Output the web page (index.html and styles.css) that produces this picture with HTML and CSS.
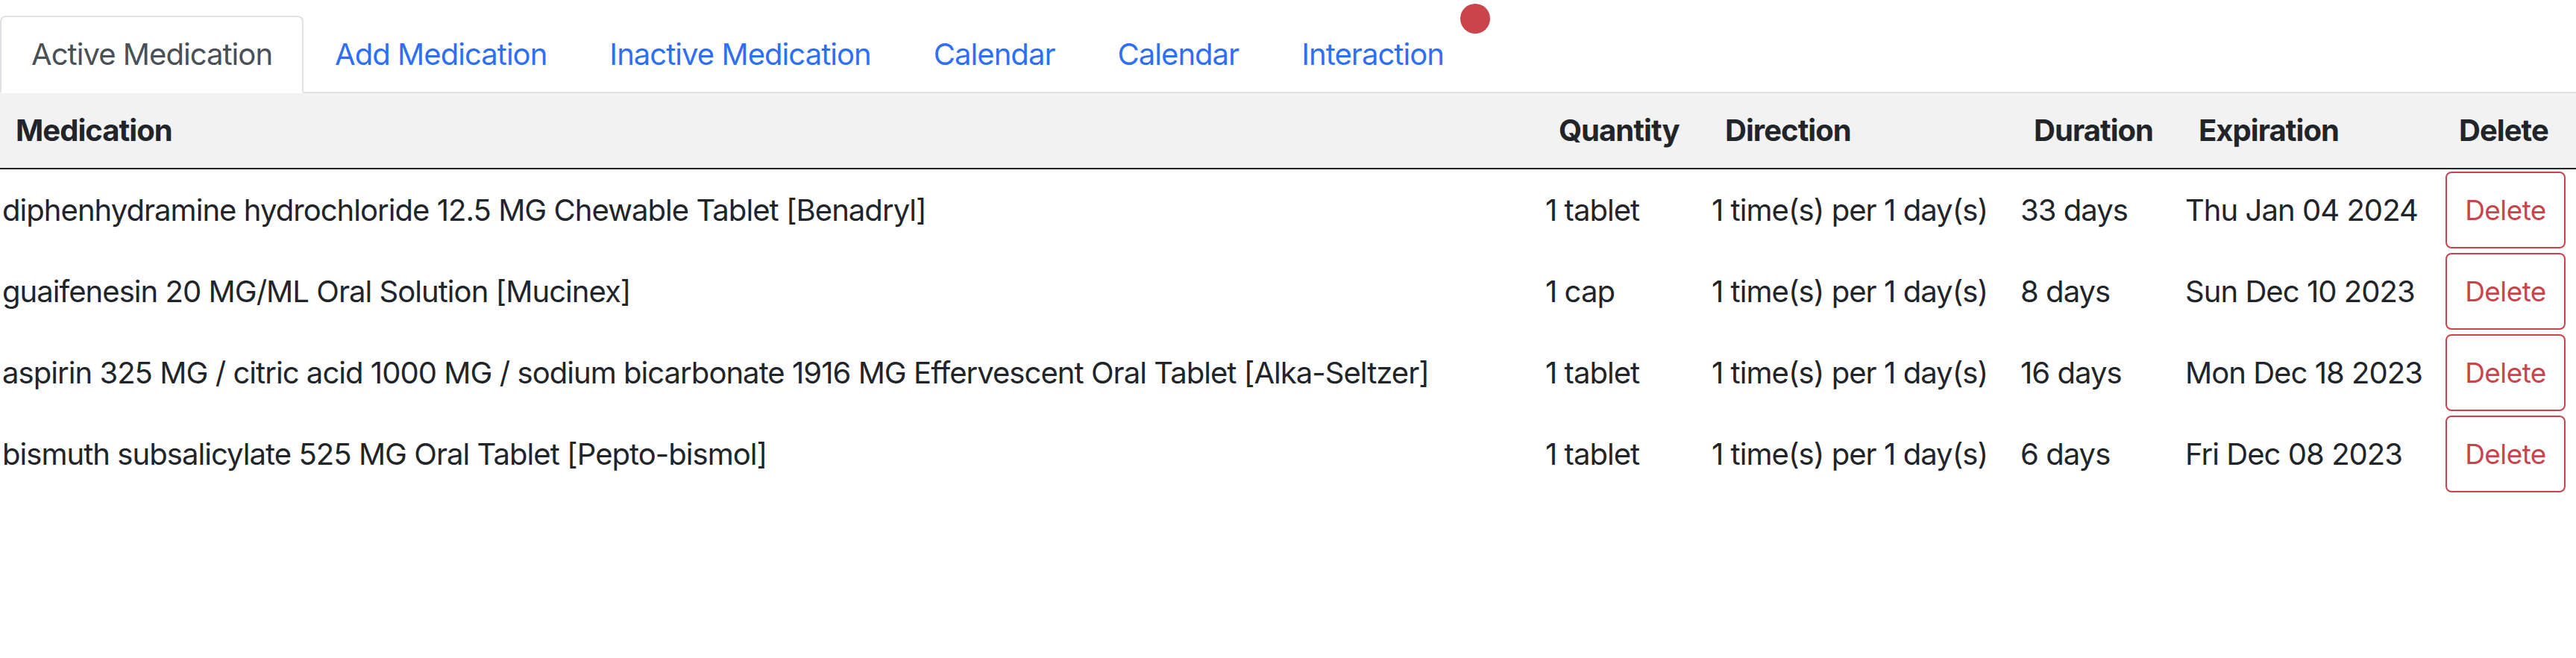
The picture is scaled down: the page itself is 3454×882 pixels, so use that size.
FILE: index.html
```html
<!DOCTYPE html>
<html lang="en">
<head>
<meta charset="utf-8">
<title>Active Medication</title>
<link rel="stylesheet" href="styles.css">
</head>
<body>
<div class="page">
  <ul class="tabs">
    <li class="tab active">Active Medication</li>
    <li class="tab">Add Medication</li>
    <li class="tab">Inactive Medication</li>
    <li class="tab">Calendar</li>
    <li class="tab">Calendar</li>
    <li class="tab badged">Interaction<span class="dot"></span></li>
  </ul>
  <table class="meds">
    <colgroup>
      <col class="c-med">
      <col class="c-qty">
      <col class="c-dir">
      <col class="c-dur">
      <col class="c-exp">
      <col class="c-del">
    </colgroup>
    <thead>
      <tr>
        <th>Medication</th>
        <th>Quantity</th>
        <th>Direction</th>
        <th>Duration</th>
        <th>Expiration</th>
        <th>Delete</th>
      </tr>
    </thead>
    <tbody>
      <tr>
        <td>diphenhydramine hydrochloride 12.5 MG Chewable Tablet [Benadryl]</td>
        <td>1 tablet</td>
        <td>1 time(s) per 1 day(s)</td>
        <td>33 days</td>
        <td>Thu Jan 04 2024</td>
        <td><button class="del">Delete</button></td>
      </tr>
      <tr>
        <td>guaifenesin 20 MG/ML Oral Solution [Mucinex]</td>
        <td>1 cap</td>
        <td>1 time(s) per 1 day(s)</td>
        <td>8 days</td>
        <td>Sun Dec 10 2023</td>
        <td><button class="del">Delete</button></td>
      </tr>
      <tr>
        <td>aspirin 325 MG / citric acid 1000 MG / sodium bicarbonate 1916 MG Effervescent Oral Tablet [Alka-Seltzer]</td>
        <td>1 tablet</td>
        <td>1 time(s) per 1 day(s)</td>
        <td>16 days</td>
        <td>Mon Dec 18 2023</td>
        <td><button class="del">Delete</button></td>
      </tr>
      <tr>
        <td>bismuth subsalicylate 525 MG Oral Tablet [Pepto-bismol]</td>
        <td>1 tablet</td>
        <td>1 time(s) per 1 day(s)</td>
        <td>6 days</td>
        <td>Fri Dec 08 2023</td>
        <td><button class="del">Delete</button></td>
      </tr>
    </tbody>
  </table>
</div>
</body>
</html>
```
FILE: styles.css
```css
html, body {
  margin: 0;
  padding: 0;
  background: #ffffff;
}

body {
  font-family: Inter, "Noto Sans", sans-serif;
  font-size: 40px;
  line-height: 60px;
  letter-spacing: -0.95px;
  color: #212529;
}

.page {
  padding-top: 21px;
}

.tabs {
  display: flex;
  margin: 0;
  padding: 0;
  list-style: none;
  border-bottom: 2px solid #dee2e6;
}

.tab {
  position: relative;
  padding: 20px 40px;
  border: 2px solid transparent;
  border-radius: 8px 8px 0 0;
  margin-bottom: -2px;
  color: #2f6ef6;
  white-space: nowrap;
}

.tab.active {
  color: #495057;
  border-color: #dee2e6 #dee2e6 #ffffff;
  background: #ffffff;
}

.dot {
  position: absolute;
  top: -18px;
  right: -22px;
  width: 40px;
  height: 40px;
  border-radius: 50%;
  background: #ca444c;
}

.meds {
  width: 100%;
  border-collapse: collapse;
  table-layout: fixed;
}

.c-med { width: 2069px; }
.c-qty { width: 223px; }
.c-dir { width: 414px; }
.c-dur { width: 221px; }
.c-exp { width: 349px; }
.c-del { width: 178px; }

.meds th {
  height: 100px;
  padding: 0 0 0 21px;
  text-align: left;
  font-weight: 700;
  background: #f2f2f2;
  border-bottom: 2px solid #212529;
  white-space: nowrap;
}

.meds td {
  height: 109px;
  padding: 0 0 0 3px;
  vertical-align: middle;
  white-space: nowrap;
}

.del {
  display: block;
  width: 161px;
  height: 103px;
  padding: 0;
  font-family: inherit;
  font-size: 37px;
  letter-spacing: -0.6px;
  color: #ca444c;
  background: #ffffff;
  border: 2px solid #ca444c;
  border-radius: 8px;
}
```
